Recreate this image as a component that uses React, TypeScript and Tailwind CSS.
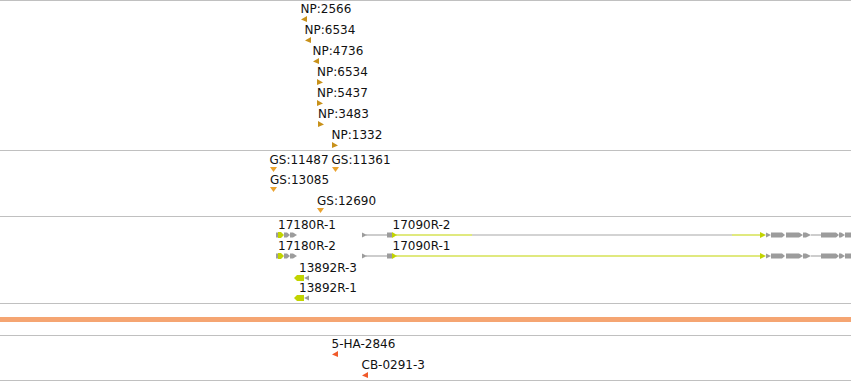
import React from "react";

const GOLD = "#c8911a";
const GS = "#eaa22e";
const RED = "#f05a2a";
const YG = "#c2d400";
const GR = "#9c9c9c";

type Glyph = "L" | "R" | "D" | "G17180" | "G17090" | "G13892";
type Feat = { x: number; y: number; t: string; g: Glyph; c?: string };

function Shape({ g, c }: { g: Glyph; c?: string }) {
  if (g === "D")
    return (
      <svg width={7} height={5}>
        <polygon points="0,0 7,0 3.5,5" fill={c} />
      </svg>
    );
  if (g === "L" || g === "R")
    return (
      <svg width={6} height={6}>
        <polygon points={g === "L" ? "6,0 6,6 0,3.5" : "0,0 0,6 6,3.5"} fill={c} />
      </svg>
    );
  if (g === "G17180")
    return (
      <svg width={24} height={6} className="-ml-[2px]">
        <rect x={0} y={0.5} width={2} height={5} fill={GR} />
        <polygon points="2,0 5,0 8,3 5,6 2,6" fill={YG} />
        <polygon points="8,0.5 11,0.5 14,3 11,5.5 8,5.5" fill={GR} />
        <polygon points="14,0.5 17,0.5 21,3 17,5.5 14,5.5" fill={GR} />
      </svg>
    );
  if (g === "G13892")
    return (
      <svg width={16} height={6} className="-ml-[5px]">
        <polygon points="0,3 3,0 10,0 10,6 3,6" fill={YG} />
        <polygon points="10,3 15,0.5 15,5.5" fill={GR} />
      </svg>
    );
  return (
    <svg width={489} height={6}>
      <polygon points="0,0.5 5,3 0,5.5" fill={GR} />
      <rect x={4} y={2.5} width={22} height={1} fill={GR} />
      <rect x={25} y={0.5} width={5} height={5} fill={GR} />
      <polygon points="30,0 35,3 30,6" fill={YG} />
      {c === "gray" ? (
        <>
          <rect x={34} y={2.5} width={76} height={1} fill={YG} />
          <rect x={110} y={2.5} width={260} height={1} fill="#a8a8a8" />
          <rect x={370} y={2.5} width={30} height={1} fill={YG} />
        </>
      ) : (
        <rect x={34} y={2.5} width={366} height={1} fill={YG} />
      )}
      <polygon points="398,0 404,3 398,6" fill={YG} />
      <polygon points="404,0.5 409,3 404,5.5" fill={GR} />
      <polygon points="409,0.5 420,0.5 423,3 420,5.5 409,5.5" fill={GR} />
      <polygon points="424,0.5 437,0.5 441,3 437,5.5 424,5.5" fill={GR} />
      <polygon points="441,0.5 444,0.5 449,3 444,5.5 441,5.5" fill={GR} />
      <rect x={449} y={2.5} width={10} height={1} fill={GR} />
      <polygon points="459,0.5 474,0.5 477,3 474,5.5 459,5.5" fill={GR} />
      <polygon points="477,0.5 479,0.5 483,3 479,5.5 477,5.5" fill={GR} />
      <rect x={483} y={0.5} width={6} height={5} fill={GR} />
    </svg>
  );
}

// A feature on the genome canvas: its label above its glyph.
function Feature({ f, top }: { f: Feat; top: number }) {
  const long = f.g === "G17090";
  return (
    <div
      className="absolute flex flex-col items-start gap-px"
      style={{ left: long ? 362 : f.x, top: f.y - top - 2.4 }}
    >
      <span className={"whitespace-nowrap text-[12px] leading-[12px] text-[#111] " + (long ? "pl-[30.5px]" : "")}>
        {f.t}
      </span>
      <Shape g={f.g} c={f.c} />
    </div>
  );
}

function Track({ h, top, feats }: { h: string; top: number; feats: Feat[] }) {
  return (
    <div className={"relative border-t border-[#c0c0c0] " + h}>
      {feats.map((f, i) => (
        <Feature key={i} f={f} top={top} />
      ))}
    </div>
  );
}

const np: Feat[] = [
  { x: 300.5, y: 4, t: "NP:2566", g: "L", c: GOLD },
  { x: 304.5, y: 25, t: "NP:6534", g: "L", c: GOLD },
  { x: 312.5, y: 46.5, t: "NP:4736", g: "L", c: GOLD },
  { x: 317, y: 67.5, t: "NP:6534", g: "R", c: GOLD },
  { x: 317, y: 88.5, t: "NP:5437", g: "R", c: GOLD },
  { x: 318, y: 109.5, t: "NP:3483", g: "R", c: GOLD },
  { x: 331.5, y: 130.5, t: "NP:1332", g: "R", c: GOLD },
];
const gs: Feat[] = [
  { x: 269.5, y: 155, t: "GS:11487", g: "D", c: GS },
  { x: 331.5, y: 155, t: "GS:11361", g: "D", c: GS },
  { x: 270, y: 175.7, t: "GS:13085", g: "D", c: GS },
  { x: 317, y: 196.7, t: "GS:12690", g: "D", c: GS },
];
const tr: Feat[] = [
  { x: 278, y: 220, t: "17180R-1", g: "G17180" },
  { x: 362, y: 220, t: "17090R-2", g: "G17090", c: "gray" },
  { x: 278, y: 241.5, t: "17180R-2", g: "G17180" },
  { x: 362, y: 241.5, t: "17090R-1", g: "G17090" },
  { x: 299, y: 263, t: "13892R-3", g: "G13892" },
  { x: 299, y: 283, t: "13892R-1", g: "G13892" },
];
const ha: Feat[] = [
  { x: 331.5, y: 339.3, t: "5-HA-2846", g: "L", c: RED },
  { x: 361.5, y: 360, t: "CB-0291-3", g: "L", c: RED },
];

export default function App() {
  return (
    <div className="flex h-[381px] w-[851px] flex-col overflow-hidden bg-white font-['DejaVu_Sans',sans-serif]">
      <Track h="h-[150px]" top={0} feats={np} />
      <Track h="h-[66px]" top={150} feats={gs} />
      <Track h="h-[87px]" top={216} feats={tr} />
      <div className="h-[32px] border-t border-[#c0c0c0] pt-[13px]">
        <div className="h-[5px] bg-[#f5a572]" />
      </div>
      <Track h="h-[45px]" top={335} feats={ha} />
      <div className="h-px shrink-0 bg-[#c0c0c0]" />
    </div>
  );
}
